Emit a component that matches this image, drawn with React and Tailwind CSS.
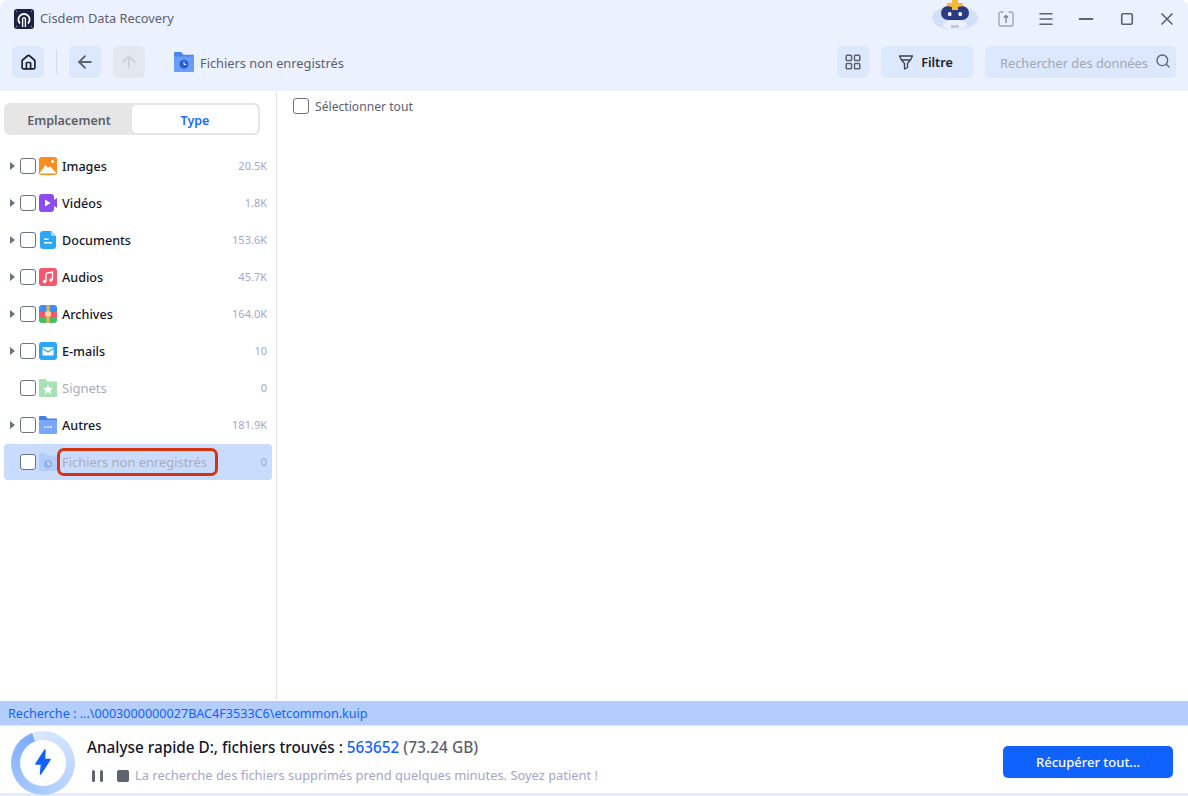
import { Home, ArrowLeft, ArrowUp, Menu, Minus, Square, X, Search, LayoutGrid } from 'lucide-react'

const font = { fontFamily: '"Noto Sans", sans-serif' }

const ImagesIcon = () => (
  <svg width="18" height="18" viewBox="0 0 18 18"><rect width="18" height="18" rx="2.5" fill="#fb8c1e" /><path d="M1 15.5 L6.5 8 L9 11 L11 9 L17 15.5 V16.5 H1Z" fill="#fff" /><circle cx="13.5" cy="4.5" r="1.4" fill="#fff" /></svg>
)
const VideosIcon = () => (
  <svg width="18" height="18" viewBox="0 0 18 18"><rect width="15" height="18" rx="3" fill="#8b4df0" /><path d="M15 6 L18 4 V14 L15 12Z" fill="#8b4df0" /><path d="M6 5.5 L11.5 9 L6 12.5Z" fill="#fff" /></svg>
)
const DocsIcon = () => (
  <svg width="18" height="18" viewBox="0 0 18 18"><path d="M4 0 H12 L17 5 V15 A3 3 0 0 1 14 18 H4 A3 3 0 0 1 1 15 V3 A3 3 0 0 1 4 0Z" fill="#2aa8f5" /><path d="M12 0 L17 5 H13 A1 1 0 0 1 12 4Z" fill="#a5dcfb" /><rect x="5" y="7.5" width="4.5" height="1.5" fill="#fff" /><rect x="5" y="11" width="8" height="1.5" fill="#fff" /></svg>
)
const AudiosIcon = () => (
  <svg width="18" height="18" viewBox="0 0 18 18"><rect width="18" height="18" rx="3" fill="#f4566c" /><path d="M7 5.5 L13.5 4 V12 M7 5.5 V13.5" stroke="#fff" strokeWidth="1.4" fill="none" /><circle cx="5.5" cy="13.5" r="1.7" fill="#fff" /><circle cx="12" cy="12" r="1.7" fill="#fff" /></svg>
)
const ArchivesIcon = () => (
  <svg width="18" height="18" viewBox="0 0 18 18"><path d="M3 0 H15 A3 3 0 0 1 18 3 V7 H0 V3 A3 3 0 0 1 3 0Z" fill="#3b8ff3" /><rect y="7" width="18" height="5" fill="#f2596b" /><path d="M0 12 H18 V15 A3 3 0 0 1 15 18 H3 A3 3 0 0 1 0 15Z" fill="#45bd6b" /><rect x="7.5" width="3" height="18" fill="#f7b346" /><rect x="6" y="6.5" width="6" height="5" rx="1" fill="#fcd9a0" /></svg>
)
const MailIcon = () => (
  <svg width="18" height="18" viewBox="0 0 18 18"><rect width="18" height="18" rx="3" fill="#2aa8f5" /><rect x="3.5" y="5" width="11" height="8.5" rx="1" fill="#fff" /><path d="M3.5 6.5 L9 10 L14.5 6.5" stroke="#2aa8f5" strokeWidth="1.2" fill="none" /></svg>
)
const FolderShape = ({ fill, tab }) => (
  <>
    <path d="M1 0 H6.5 L8.5 2.5 H17 A1 1 0 0 1 18 3.5 V5 H0 V1 A1 1 0 0 1 1 0Z" fill={tab} />
    <path d="M0 4 H17 A1 1 0 0 1 18 5 V17 A1 1 0 0 1 17 18 H1 A1 1 0 0 1 0 17Z" fill={fill} />
  </>
)
const StarFolder = () => (
  <svg width="18" height="18" viewBox="0 0 18 18"><FolderShape fill="#a8e2b4" tab="#a8e2b4" /><path d="M9 5.5 L10.4 8.8 L14 9.1 L11.3 11.4 L12.1 15 L9 13.1 L5.9 15 L6.7 11.4 L4 9.1 L7.6 8.8Z" fill="#fff" /></svg>
)
const DotsFolder = () => (
  <svg width="18" height="18" viewBox="0 0 18 18"><FolderShape fill="#7aa6fb" tab="#3f7ff0" /><circle cx="6" cy="11" r="0.9" fill="#fff" /><circle cx="9" cy="11" r="0.9" fill="#fff" /><circle cx="12" cy="11" r="0.9" fill="#fff" /></svg>
)
const ClockFolder = ({ fill, tab, size = 18, dot }) => (
  <svg width={size} height={size} viewBox="0 0 18 18"><FolderShape fill={fill} tab={tab} /><circle cx="9" cy="11" r="4" fill={dot} /><path d="M9 8.8 V11.2 H11" stroke="#fff" strokeWidth="0.9" fill="none" /></svg>
)

const rows = [
  { name: 'Images', count: '20.5K', icon: <ImagesIcon />, arrow: true },
  { name: 'Vidéos', count: '1.8K', icon: <VideosIcon />, arrow: true },
  { name: 'Documents', count: '153.6K', icon: <DocsIcon />, arrow: true },
  { name: 'Audios', count: '45.7K', icon: <AudiosIcon />, arrow: true },
  { name: 'Archives', count: '164.0K', icon: <ArchivesIcon />, arrow: true },
  { name: 'E-mails', count: '10', icon: <MailIcon />, arrow: true },
  { name: 'Signets', count: '0', icon: <StarFolder />, muted: true },
  { name: 'Autres', count: '181.9K', icon: <DotsFolder />, arrow: true },
]

function Row({ row }) {
  return (
    <div className="h-[37px] flex items-center pl-[10px] pr-[9px]">
      <div className="w-[10px] flex items-center">
        {row.arrow && <div className="w-0 h-0 border-y-[4px] border-y-transparent border-l-[5px] border-l-[#6b7280]" />}
      </div>
      <div className="w-[14px] h-[14px] box-content border border-[#6b7085] rounded-[3px] bg-white" />
      <div className="ml-[3px] w-[18px] h-[18px]">{row.icon}</div>
      <span className={`ml-[5px] mt-[3px] ${row.muted ? 'text-[13px] text-[#a9acb8]' : 'text-[12.6px] font-medium text-[#14172b]'}`}>{row.name}</span>
      <span className="ml-auto mt-[1px] text-[11px] text-[#a3a6cf]">{row.count}</span>
    </div>
  )
}

export default function App() {
  return (
    <div style={font} className="w-[1188px] h-[796px] bg-white flex flex-col overflow-hidden">
      <div className="h-[91px] shrink-0 bg-[#ebf2fe] rounded-t-lg flex flex-col">
        <div className="h-[37px] flex items-center pl-[14px]">
          <svg width="20" height="20" viewBox="0 0 20 20">
            <rect width="20" height="20" rx="3" fill="#1c2342" />
            <circle cx="2.5" cy="2.5" r="0.7" fill="#8a90a8" />
            <circle cx="17.5" cy="2.5" r="0.7" fill="#8a90a8" />
            <circle cx="2.5" cy="17.5" r="0.7" fill="#8a90a8" />
            <circle cx="17.5" cy="17.5" r="0.7" fill="#8a90a8" />
            <path d="M6 14.5 A5.6 5.6 0 1 1 14 14.5" stroke="#fff" strokeWidth="1.8" fill="none" />
            <path d="M8.6 18 V10 A1.4 1.4 0 0 1 11.4 10 V18" stroke="#fff" strokeWidth="1.4" fill="none" />
          </svg>
          <span className="ml-[6px] text-[12.8px] text-[#5b5f73]">Cisdem Data Recovery</span>
          <div className="ml-auto flex items-center">
            <svg width="46" height="30" viewBox="0 0 46 30" className="-mt-[7px] mr-[20px]">
              <ellipse cx="23" cy="18" rx="23" ry="12" fill="#d3e0fb" />
              <ellipse cx="23" cy="25" rx="12" ry="5" fill="#eaf0fd" />
              <rect x="19" y="25" width="8" height="3" fill="#c4c9d6" />
              <rect x="9" y="6" width="28" height="14" rx="7" fill="#2c3a82" />
              <path d="M20 0 H26 V3 H31 V6 L26 7 V10 H20 V7 L15 6 V3 H20Z" fill="#f7b93a" />
              <rect x="16" y="12" width="3.5" height="4" rx="1.5" fill="#fff" />
              <rect x="26.5" y="12" width="3.5" height="4" rx="1.5" fill="#fff" />
            </svg>
            <svg width="16" height="16" viewBox="0 0 16 16" fill="none" className="mr-[23px]">
              <path d="M5.5 1 H3 A2 2 0 0 0 1 3 V13 A2 2 0 0 0 3 15 H13 A2 2 0 0 0 15 13 V3 A2 2 0 0 0 13 1 H10.5" stroke="#a1a5b2" strokeWidth="1.4" />
              <path d="M8 12 V4.5 M5.8 6.8 L8 4.5 L10.2 6.8" stroke="#7d8190" strokeWidth="1.3" />
            </svg>
            <Menu size={18} strokeWidth={2} className="text-[#5f6370] mr-[20px]" />
            <Minus size={22} strokeWidth={2} className="text-[#5f6370] mr-[23px]" />
            <Square size={14} strokeWidth={2.8} className="text-[#5f6370] mr-[23px]" />
            <X size={20} strokeWidth={2} className="text-[#5f6370] mr-[11px]" />
          </div>
        </div>
        <div className="h-[32px] mt-[9px] flex items-center pl-[12px] pr-[12px]">
          <div className="w-8 h-8 rounded-[5px] bg-[#dbe8fd] flex items-center justify-center">
            <Home size={17} strokeWidth={2.4} className="text-[#1f2433]" />
          </div>
          <div className="w-px h-[24px] bg-[#d5d8de] mx-[12px]" />
          <div className="w-8 h-8 rounded-[5px] bg-[#dbe8fd] flex items-center justify-center">
            <ArrowLeft size={20} strokeWidth={2.2} className="text-[#5f6370]" />
          </div>
          <div className="ml-[12px] w-8 h-8 rounded-[5px] bg-[#e3e7ef] flex items-center justify-center">
            <ArrowUp size={20} strokeWidth={2.2} className="text-[#ced2da]" />
          </div>
          <div className="ml-[29px] w-[20px] h-[20px]">
            <ClockFolder size={20} fill="#6b9cf6" tab="#4a86ef" dot="#1e5fe0" />
          </div>
          <span className="ml-[6px] mt-[4px] text-[12.8px] text-[#5b5f73]">Fichiers non enregistrés</span>
          <div className="ml-auto w-8 h-8 rounded-[5px] bg-[#dbe8fd] flex items-center justify-center">
            <LayoutGrid size={18} strokeWidth={2} className="text-[#5f6370]" />
          </div>
          <div className="ml-[12px] w-[92px] h-8 rounded-[5px] bg-[#dbe8fd] flex items-center justify-center gap-[7px] pr-[3px]">
            <svg width="16" height="16" viewBox="0 0 16 16" fill="none" stroke="#3b3f4c" strokeWidth="1.3" strokeLinejoin="round">
              <path d="M1.5 2 H14.5 L12.5 6 H3.5Z" />
              <path d="M3.5 6 L6.5 9.5 V15 L9.5 13.5 V9.5 L12.5 6" />
            </svg>
            <span className="mt-[3px] text-[12.6px] font-semibold text-[#1c2030]">Filtre</span>
          </div>
          <div className="ml-[12px] w-[191px] h-8 rounded-[5px] bg-[#dbe8fd] flex items-center pl-[15px]">
            <span className="mt-[4px] text-[12.8px] text-[#a2a6b3]">Rechercher des données</span>
            <Search size={16} strokeWidth={2} className="text-[#5f6370] ml-[7px] -mt-[2px]" />
          </div>
        </div>
      </div>

      <div className="flex-1 flex min-h-0">
        <div className="w-[277px] shrink-0 border-r border-[#e4e5e8] pl-[4px] pr-[4px] pt-[12px]">
          <div className="w-[256px] h-[32px] rounded-[6px] bg-[#e6e6e6] p-[2px] flex">
            <div className="w-[126px] pt-[4px] flex items-center justify-center text-[12.5px] font-semibold text-[#5b5f6b]">Emplacement</div>
            <div className="flex-1 pt-[4px] rounded-[5px] bg-white flex items-center justify-center text-[12.5px] font-semibold text-[#1a6bff]">Type</div>
          </div>
          <div className="mt-[12px] -mx-[4px]">
            {rows.map(row => <Row key={row.name} row={row} />)}
          </div>
          <div className="relative mt-[1px] h-[36px] rounded-[4px] bg-[#c9dcfd] flex items-center pl-[16px] pr-[5px]">
            <div className="w-[14px] h-[14px] box-content border border-[#6b7085] rounded-[3px] bg-white" />
            <div className="ml-[3px] w-[18px] h-[18px]">
              <ClockFolder fill="#b3cdfb" tab="#b3cdfb" dot="#8fb1f3" />
            </div>
            <span className="ml-[5px] mt-[2px] text-[12.9px] text-[#a9acb8]">Fichiers non enregistrés</span>
            <span className="ml-auto mt-[1px] text-[11px] text-[#a3a6cf]">0</span>
            <div className="absolute left-[53px] top-[4px] w-[161px] h-[28px] rounded-[7px] border-[3px] border-[#d8330f]" />
          </div>
        </div>
        <div className="flex-1 pl-[16px] pt-[5px]">
          <div className="flex items-center h-[20px]">
            <div className="w-[14px] h-[14px] box-content border border-[#6b7085] rounded-[3px]" />
            <span className="ml-[6px] mt-[3px] text-[12.15px] text-[#5b5f73]">Sélectionner tout</span>
          </div>
        </div>
      </div>

      <div className="h-[24px] shrink-0 bg-[#b3cdfd] flex items-center pl-[8px] text-[12.6px] text-[#0f62fe]">
        <span className="mt-[2px]">Recherche : ...\0003000000027BAC4F3533C6\etcommon.kuip</span>
      </div>
      <div className="h-[68px] shrink-0 bg-white border-t border-[#e4e7ec] flex items-center pl-[11px] pr-[15px]">
        <div className="relative mt-[6px] w-[64px] h-[64px] rounded-full flex items-center justify-center bg-[conic-gradient(from_340deg,#dce9ff,#b3d0ff_50%,#7bacff)]">
          <div className="w-[46px] h-[46px] rounded-full bg-white flex items-center justify-center">
            <svg width="16" height="26" viewBox="0 0 16 26" className="-mt-[2px]"><path d="M10 1 L1 15 H6.5 L5.5 25 L15 10.5 H9.5Z" fill="#0f62fe" stroke="#0f62fe" strokeWidth="1.5" strokeLinejoin="round" /></svg>
          </div>
        </div>
        <div className="ml-[12px] mt-[2px] flex flex-col">
          <div className="text-[15.3px] font-medium text-[#14172b]">
            Analyse rapide D:, fichiers trouvés : <span className="text-[#0f62fe]">563652</span> <span className="text-[15.5px] text-[#5b5f6b]">(73.24 GB)</span>
          </div>
          <div className="mt-[7px] flex items-center">
            <div className="ml-[5px] w-[3px] h-[12px] rounded-sm bg-[#5f6370]" />
            <div className="ml-[5px] w-[3px] h-[12px] rounded-sm bg-[#5f6370]" />
            <div className="ml-[14px] w-[12px] h-[12px] rounded-[2px] bg-[#5f6370]" />
            <span className="ml-[6px] text-[12.9px] text-[#a3a6cf]">La recherche des fichiers supprimés prend quelques minutes. Soyez patient !</span>
          </div>
        </div>
        <div className="ml-auto mt-[4px] w-[170px] h-[32px] rounded-[5px] bg-[#0f62fe] flex items-center justify-center text-[13px] font-medium text-white"><span className="mt-[3px]">Récupérer tout...</span></div>
      </div>
      <div className="h-[3px] shrink-0 bg-[#e3edfd]" />
    </div>
  )
}
